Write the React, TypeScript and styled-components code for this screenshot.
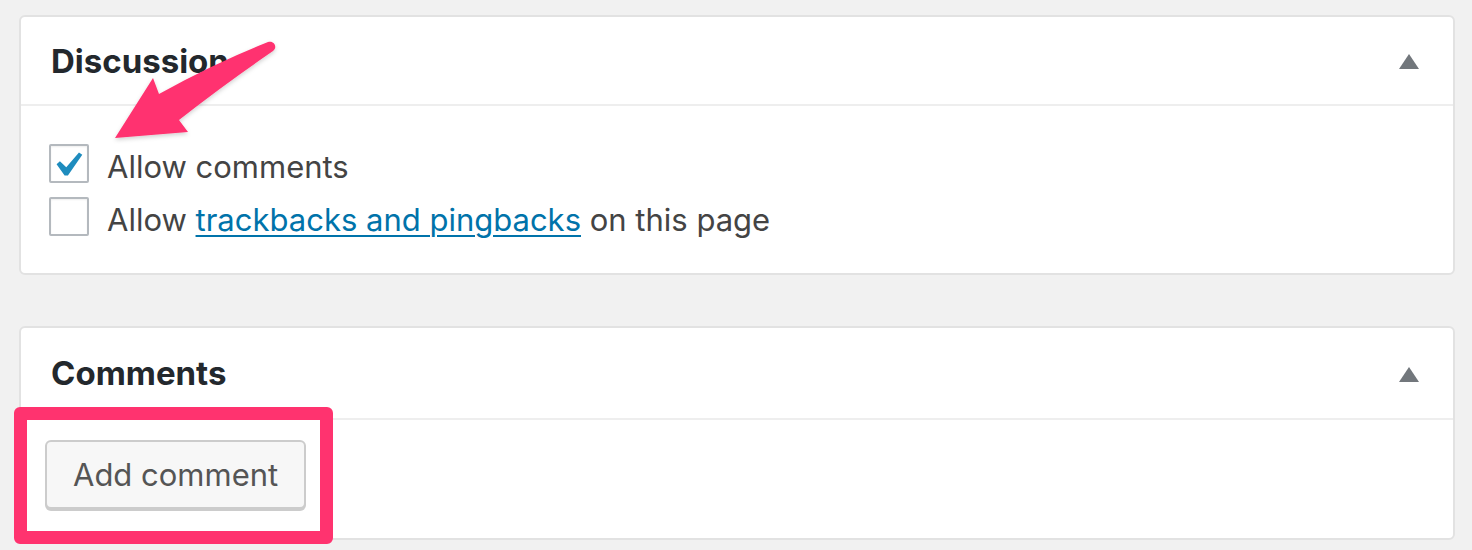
import React from "react";
import styled, { createGlobalStyle } from "styled-components";

const GlobalStyle = createGlobalStyle`
	html, body {
		margin: 0;
		padding: 0;
		background: #f1f1f1;
	}
	body {
		font-family: Inter, "Liberation Sans", Arial, sans-serif;
		-webkit-font-smoothing: antialiased;
	}
`;

function App() {
	return (
		<>
			<GlobalStyle />
			<Page>
				<Panel>
					<PanelHeader $height={87}>
						<Title>Discussion</Title>
						<Toggle />
					</PanelHeader>
					<DiscussionBody>
						<OptionRow>
							<CheckBox $checked>
								<svg width="27" height="24" viewBox="5.6 4.7 10.8 9.7">
									<path
										d="M14.83 4.89l1.34.94-5.81 8.38H9.02L5.78 9.67l1.34-1.25 2.57 2.4z"
										fill="#1e8cbe"
									/>
								</svg>
							</CheckBox>
							<Label>Allow comments</Label>
						</OptionRow>
						<OptionRow>
							<CheckBox />
							<Label>
								Allow <Link href="#">trackbacks and pingbacks</Link> on this
								page
							</Label>
						</OptionRow>
					</DiscussionBody>
				</Panel>

				<Panel>
					<PanelHeader $height={90}>
						<Title>Comments</Title>
						<Toggle />
					</PanelHeader>
					<CommentsBody>
						<Button>Add comment</Button>
					</CommentsBody>
				</Panel>

				<Arrow
					width="180"
					height="110"
					viewBox="105 35 180 110"
					aria-hidden="true"
				>
					<defs>
						<filter id="arrowShadow" x="-10%" y="-10%" width="130%" height="130%">
							<feDropShadow dx="0" dy="2" stdDeviation="2" floodColor="#000" floodOpacity="0.18" />
						</filter>
					</defs>
					<path
						d="M268 42 C274 40 278 47 273 51 Q222 86 179 120 L188 132 L115 138 L153 78 L159 94 Q213 64 268 42 Z"
						fill="#ff336f"
						filter="url(#arrowShadow)"
					/>
				</Arrow>
				<Highlight />
			</Page>
		</>
	);
}

export default App;

const Page = styled.div`
	position: relative;
	display: flex;
	flex-direction: column;
	gap: 51px;
	padding: 15px 17px 0 19px;
	height: 550px;
	box-sizing: border-box;
	overflow: hidden;
`;

const Panel = styled.section`
	background: #fff;
	border: 2px solid #e2e2e2;
	border-radius: 6px;
`;

const PanelHeader = styled.div<{ $height: number }>`
	display: flex;
	align-items: center;
	justify-content: space-between;
	height: ${(p) => p.$height}px;
	padding: 0 34px 0 30px;
	border-bottom: 2px solid #eeeeee;
`;

const Title = styled.h2`
	margin: 0;
	font-size: 33px;
	font-weight: 700;
	color: #23282d;
`;

const Toggle = styled.span`
	width: 0;
	height: 0;
	border-left: 10px solid transparent;
	border-right: 10px solid transparent;
	border-bottom: 15px solid #72777c;
	margin-top: 2px;
`;

const DiscussionBody = styled.div`
	display: flex;
	flex-direction: column;
	gap: 13px;
	padding: 38px 28px 36px;
`;

const OptionRow = styled.label`
	display: flex;
	align-items: flex-start;
	gap: 18px;
	height: 40px;
`;

const CheckBox = styled.span<{ $checked?: boolean }>`
	display: flex;
	align-items: center;
	justify-content: center;
	width: 36px;
	height: 35px;
	border: 2px solid #b4b9be;
	border-radius: 2px;
	background: #fff;
	box-shadow: inset 0 1px 2px rgba(0, 0, 0, 0.07);
	flex-shrink: 0;
`;

const Label = styled.span`
	font-size: 31px;
	color: #444;
	line-height: 46px;
`;

const Link = styled.a`
	color: #0073aa;
	text-decoration: underline;
	text-decoration-thickness: 2px;
	text-underline-offset: 4px;
`;

const CommentsBody = styled.div`
	padding: 20px 24px 29px;
`;

const Button = styled.button`
	height: 69px;
	padding: 0 26px;
	font-family: inherit;
	font-size: 31px;
	color: #555;
	background: #f7f7f7;
	border: 2px solid #cccccc;
	border-radius: 6px;
	box-shadow: 0 2px 0 #cccccc;
	cursor: pointer;
`;

const Arrow = styled.svg`
	position: absolute;
	left: 105px;
	top: 35px;
	overflow: visible;
`;

const Highlight = styled.div`
	position: absolute;
	left: 14px;
	top: 407px;
	width: 319px;
	height: 137px;
	box-sizing: border-box;
	border: 13px solid #ff336f;
	border-radius: 6px;
	pointer-events: none;
`;
